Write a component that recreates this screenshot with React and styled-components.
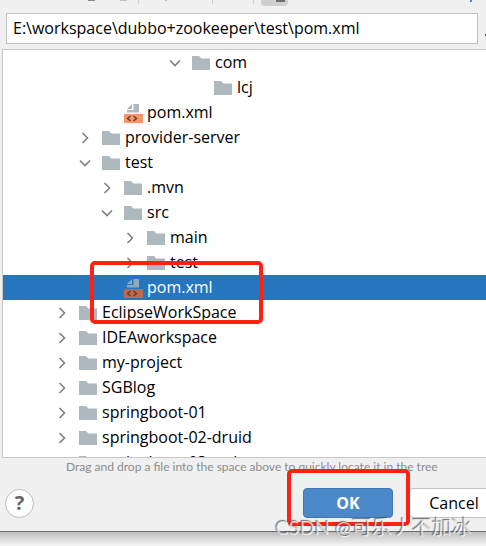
import React, { useState } from 'react';
import styled, { createGlobalStyle } from 'styled-components';

const rows = [
  { name: 'com', level: 5, kind: 'folder', state: 'open' },
  { name: 'lcj', level: 6, kind: 'folder' },
  { name: 'pom.xml', level: 2, kind: 'xml' },
  { name: 'provider-server', level: 1, kind: 'folder', state: 'closed' },
  { name: 'test', level: 1, kind: 'folder', state: 'open' },
  { name: '.mvn', level: 2, kind: 'folder', state: 'closed' },
  { name: 'src', level: 2, kind: 'folder', state: 'open' },
  { name: 'main', level: 3, kind: 'folder', state: 'closed' },
  { name: 'test', level: 3, kind: 'folder', state: 'closed' },
  { name: 'pom.xml', level: 2, kind: 'xml' },
  { name: 'EclipseWorkSpace', level: 0, kind: 'folder', state: 'closed' },
  { name: 'IDEAworkspace', level: 0, kind: 'folder', state: 'closed' },
  { name: 'my-project', level: 0, kind: 'folder', state: 'closed' },
  { name: 'SGBlog', level: 0, kind: 'folder', state: 'closed' },
  { name: 'springboot-01', level: 0, kind: 'folder', state: 'closed' },
  { name: 'springboot-02-druid', level: 0, kind: 'folder', state: 'closed' },
  { name: 'springboot-03-web', level: 0, kind: 'folder', state: 'closed' },
];

const Chevron = ({ state }) => (
  <svg width="12" height="12" viewBox="0 0 12 12" fill="none" stroke="#7f7f7f" strokeWidth="1.6">
    {state === 'open' && <path d="M1 3.5 L6 8.5 L11 3.5" />}
    {state === 'closed' && <path d="M3.5 1 L8.5 6 L3.5 11" />}
  </svg>
);

const FolderIcon = () => (
  <svg width="19" height="16" viewBox="0 0 19 16">
    <path d="M0 1 H7 L9.5 3.5 H18 V15 H0 Z" fill="#adb8bf" />
  </svg>
);

const XmlIcon = ({ selected }) => (
  <svg width="19" height="20" viewBox="0 0 19 20">
    <path d="M9.5 1 H15 V9.5 H3 V7 H9.5 Z" fill={selected ? '#8fa9bf' : '#adb8bf'} />
    <path d="M3 6 L8 1 V6 Z" fill={selected ? '#8fa9bf' : '#adb8bf'} />
    <rect y="11" width="19" height="9" fill={selected ? '#b76b52' : '#f89669'} />
    <path d="M6.5 13 L3.5 15.5 L6.5 18 M9.5 13 L12.5 15.5 L9.5 18" fill="none" stroke="#5f3a2b" strokeWidth="1.4" />
  </svg>
);

const App = () => {
  const [path, setPath] = useState('E:\\workspace\\dubbo+zookeeper\\test\\pom.xml');
  const [selected, setSelected] = useState(9);

  return (
    <Page>
      <GlobalStyle />
      <Dialog>
        <Toolbar>
          <svg width="486" height="6" viewBox="0 0 486 6">
            <path d="M88 0 H95" stroke="#8a8a8a" strokeWidth="2" />
            <path d="M120 0 H127 M165 0 H167" stroke="#c4c4c4" strokeWidth="2" />
            <path d="M138.5 0 V4 M212.5 0 V4 M253.5 0 V4" stroke="#cfcfcf" />
            <path d="M261 0 H288 V2 Q288 6 284 6 H265 Q261 6 261 2 Z" fill="#cfcfcf" />
            <rect x="276" width="9" height="2" fill="#6e6e6e" />
            <rect x="470" width="2" height="2" fill="#3d8fd1" />
          </svg>
        </Toolbar>
        <PathRow>
          <PathInput aria-label="Path" value={path} onChange={(e) => setPath(e.target.value)} />
          <HistoryMark />
        </PathRow>
        <Tree>
          {rows.map((row, i) => (
            <Row
              key={i}
              type="button"
              $level={row.level}
              $selected={i === selected}
              onClick={() => setSelected(i)}
            >
              <Chevron state={row.state} />
              <IconSlot>
                {row.kind === 'xml' ? <XmlIcon selected={i === selected} /> : <FolderIcon />}
              </IconSlot>
              <RowName>{row.name}</RowName>
            </Row>
          ))}
        </Tree>
        <Hint>Drag and drop a file into the space above to quickly locate it in the tree</Hint>
        <Footer>
          <HelpButton type="button" aria-label="Help">?</HelpButton>
          <Actions>
            <PrimaryButton type="button">OK</PrimaryButton>
            <Button type="button">Cancel</Button>
          </Actions>
        </Footer>
      </Dialog>
      <Shadow />
      <TreeMark />
      <OkMark />
      <Watermark>CSDN @可乐丿不加冰</Watermark>
    </Page>
  );
};

export default App;

const GlobalStyle = createGlobalStyle`
  * {
    box-sizing: border-box;
  }

  body {
    margin: 0;
    background-color: #fff;
    font-family: "Open Sans", "Noto Sans CJK SC", sans-serif;
    color: #000;
  }

  button, input {
    font-family: inherit;
    color: inherit;
  }
`;

const Page = styled.div`
  position: relative;
  overflow: hidden;
`;

const Dialog = styled.div`
  background-color: #f0f0f0;
  border-bottom: 1px solid #6e6e6e;
`;

const Toolbar = styled.div`
  display: flex;
  height: 13px;
  overflow: hidden;
`;

const PathRow = styled.div`
  display: flex;
  align-items: center;
  justify-content: space-between;
  padding-left: 6px;
`;

const PathInput = styled.input`
  flex: 1;
  height: 31px;
  margin-right: 7px;
  padding: 0 6px 2px;
  border: 1px solid #c0c0c0;
  background-color: #fff;
  font-size: 16px;
`;

const HistoryMark = styled.span`
  width: 1px;
  height: 2px;
  margin-top: 12px;
  background-color: #555;
`;

const Tree = styled.div`
  height: 409px;
  margin: 5px 0 0 2px;
  border: solid #c8c8c8;
  border-width: 1px 0 1px 1px;
  background-color: #fff;
  overflow: hidden;
`;

const Row = styled.button`
  display: flex;
  align-items: center;
  width: 100%;
  height: 25px;
  padding: 0 0 0 ${({ $level }) => 53 + Math.ceil(($level * 45) / 2)}px;
  border: none;
  background-color: ${({ $selected }) => ($selected ? '#2675bf' : 'transparent')};
  color: ${({ $selected }) => ($selected ? '#fff' : '#000')};
  font-size: 16px;
  line-height: 22px;
  white-space: nowrap;
`;

const RowName = styled.span`
  padding-bottom: 2px;
`;

const IconSlot = styled.span`
  display: flex;
  width: 19px;
  margin: 0 4px 0 11px;
`;

const Hint = styled.div`
  padding-left: 66px;
  color: #8c8c8c;
  font-family: Lato, sans-serif;
  font-size: 12px;
  line-height: 18px;
  white-space: nowrap;
`;

const Footer = styled.div`
  display: flex;
  align-items: center;
  justify-content: space-between;
  padding: 12px 0 13px 5px;
`;

const HelpButton = styled.button`
  width: 29px;
  height: 29px;
  padding: 0;
  border: 1px solid #bdbdbd;
  border-radius: 50%;
  background-color: #fff;
  color: #666;
  font-size: 20px;
  font-weight: 700;
  line-height: 26px;
`;

const Actions = styled.div`
  display: flex;
  gap: 16px;
  margin-right: -13px;
`;

const Button = styled.button`
  width: 90px;
  height: 30px;
  padding: 0;
  border: 1px solid #c4c4c4;
  border-radius: 4px;
  background-color: #fff;
  font-size: 16px;
  line-height: 28px;
`;

const PrimaryButton = styled(Button)`
  border-color: #3f77b5;
  background-color: #4b89c9;
  color: #fff;
  font-weight: 700;
`;

const Shadow = styled.div`
  height: 14px;
  background: linear-gradient(#bdbdbd, #f6f6f6);
`;

const Mark = styled.div`
  position: absolute;
  border: 4px solid #ff2113;
  border-radius: 5px;
  pointer-events: none;
`;

const TreeMark = styled(Mark)`
  top: 261px;
  left: 90px;
  width: 173px;
  height: 63px;
`;

const OkMark = styled(Mark)`
  top: 469px;
  left: 287px;
  width: 123px;
  height: 57px;
`;

const Watermark = styled.div`
  position: absolute;
  right: 14px;
  bottom: 4px;
  color: rgba(255, 255, 255, 0.7);
  font-family: Lato, "Noto Sans CJK SC", sans-serif;
  font-size: 20px;
  line-height: 30px;
  text-shadow: -1px -1px 1px rgba(80, 80, 80, 0.8);
  white-space: nowrap;
  pointer-events: none;
`;
